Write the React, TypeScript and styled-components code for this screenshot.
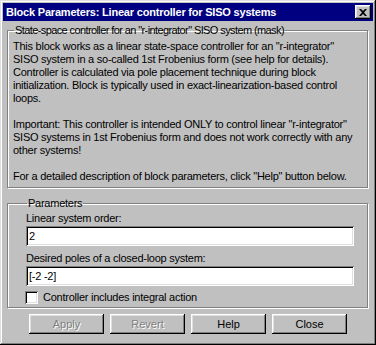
import styled, { createGlobalStyle } from "styled-components";

const Global = createGlobalStyle`
  html, body {
    margin: 0;
    padding: 0;
    background: #c0c0c0;
  }
  * { box-sizing: border-box; }
`

const Window = styled.div`
  width: 376px;
  height: 345px;
  background: #c0c0c0;
  padding: 3px;
  font-family: "Liberation Sans", Arial, sans-serif;
  font-size: 11px;
  letter-spacing: -0.25px;
  color: #000;
  box-shadow: inset -1px -1px #000, inset 1px 1px #dfdfdf, inset -2px -2px #808080, inset 2px 2px #fff;
  display: flex;
  flex-direction: column;
`

const TitleBar = styled.div`
  height: 18px;
  background: #000080;
  color: #fff;
  display: flex;
  align-items: center;
  justify-content: space-between;
  padding: 0 2px 0 3px;
`

const TitleText = styled.span`
  font-weight: bold;
  font-size: 11px;
  letter-spacing: -0.2px;
`

const CloseBox = styled.button`
  width: 16px;
  height: 14px;
  padding: 0;
  border: none;
  background: #c0c0c0;
  display: flex;
  align-items: center;
  justify-content: center;
  box-shadow: inset -1px -1px #000, inset 1px 1px #fff, inset -2px -2px #808080, inset 2px 2px #dfdfdf;
`

const Body = styled.div`
  padding: 3px 5px 0 4px;
  display: flex;
  flex-direction: column;
`

const Group = styled.fieldset<{ $pad: string }>`
  margin: 0;
  padding: ${(p) => p.$pad};
  border: 1px solid #808080;
  box-shadow: inset 1px 1px #fff, 1px 1px #fff;
  min-width: 0;
`

const Legend = styled.legend<{ $tight?: boolean }>`
  padding: 0 1px;
  margin-left: 1px;
  line-height: 13px;
  letter-spacing: ${(p) => (p.$tight ? "-0.6px" : "-0.25px")};
`

const Description = styled.div`
  white-space: pre;
  line-height: 13px;
`

const Label = styled.div<{ $top: number }>`
  line-height: 13px;
  margin-top: ${(p) => p.$top}px;
`

const Field = styled.input`
  display: block;
  width: 100%;
  height: 20px;
  margin: 1px 0 0;
  padding: 0 3px;
  border: none;
  background: #fff;
  font-family: "Liberation Sans", Arial, sans-serif;
  font-size: 11px;
  letter-spacing: -0.25px;
  color: #000;
  outline: none;
  box-shadow: inset 1px 1px #808080, inset -1px -1px #fff, inset 2px 2px #000, inset -2px -2px #dfdfdf;
`

const CheckRow = styled.label`
  display: flex;
  align-items: center;
  gap: 5px;
  height: 16px;
  margin-top: 3px;
`

const CheckBox = styled.span`
  width: 13px;
  height: 13px;
  margin-left: -1px;
  background: #fff;
  box-shadow: inset 1px 1px #808080, inset -1px -1px #fff, inset 2px 2px #000, inset -2px -2px #dfdfdf;
`

const ButtonRow = styled.div`
  display: flex;
  justify-content: flex-end;
  gap: 6px;
  margin-top: 6px;
  padding-right: 21px;
`

const Button = styled.button<{ $disabled?: boolean }>`
  width: 75px;
  height: 20px;
  border: none;
  padding: 0;
  background: #c0c0c0;
  font-family: "Liberation Sans", Arial, sans-serif;
  font-size: 11px;
  color: ${(p) => (p.$disabled ? "#808080" : "#000")};
  text-shadow: ${(p) => (p.$disabled ? "1px 1px #fff" : "none")};
  box-shadow: inset -1px -1px #000, inset 1px 1px #fff, inset -2px -2px #808080, inset 2px 2px #dfdfdf;
`

const description = `This block works as a linear state-space controller for an "r-integrator"
SISO system in a so-called 1st Frobenius form (see help for details).
Controller is calculated via pole placement technique during block
initialization. Block is typically used in exact-linearization-based control
loops.

Important: This controller is intended ONLY to control linear "r-integrator"
SISO systems in 1st Frobenius form and does not work correctly with any
other systems!

For a detailed description of block parameters, click "Help" button below.`

export default function App() {
  return (
    <>
      <Global />
      <Window>
        <TitleBar>
          <TitleText>Block Parameters: Linear controller for SISO systems</TitleText>
          <CloseBox>
            <svg width="8" height="7" viewBox="0 0 8 7">
              <path d="M0 0h2l2 2 2-2h2L5 3.5 8 7H6L4 5 2 7H0l3-3.5z" fill="#000" />
            </svg>
          </CloseBox>
        </TitleBar>
        <Body>
          <Group $pad="3px 4px 4px 5px">
            <Legend $tight>State-space controller for an "r-integrator" SISO system (mask)</Legend>
            <Description>{description}</Description>
          </Group>
          <Group $pad="0 13px 2px 18px" style={{ marginTop: 9 }}>
            <Legend>Parameters</Legend>
            <Label $top={2}>Linear system order:</Label>
            <Field defaultValue="2" />
            <Label $top={6}>Desired poles of a closed-loop system:</Label>
            <Field defaultValue="[-2 -2]" />
            <CheckRow>
              <CheckBox />
              Controller includes integral action
            </CheckRow>
          </Group>
          <ButtonRow>
            <Button $disabled>Apply</Button>
            <Button $disabled>Revert</Button>
            <Button>Help</Button>
            <Button>Close</Button>
          </ButtonRow>
        </Body>
      </Window>
    </>
  )
}
